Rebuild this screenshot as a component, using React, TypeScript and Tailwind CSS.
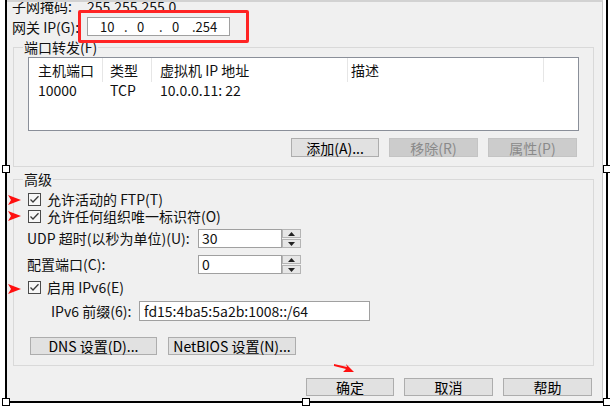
import React from "react";

const Check = () => (
  <svg width="13" height="13" viewBox="0 0 13 13" className="shrink-0">
    <rect x="0.5" y="0.5" width="12" height="12" fill="#f7f7f7" stroke="#4a4a4a" />
    <polyline points="2.5,6.5 5,9 10.5,3.2" fill="none" stroke="#3a3a3a" strokeWidth="1.3" />
  </svg>
);

const Spinner = () => (
  <div className="flex flex-col w-[19px] h-[19px] gap-[1px]">
    <div className="flex-1 flex items-center justify-center bg-[#e6e6e6] border border-[#b4b4b4]">
      <svg width="7" height="4" viewBox="0 0 7 4">
        <polygon points="0,4 3.5,0 7,4" fill="#222" />
      </svg>
    </div>
    <div className="flex-1 flex items-center justify-center bg-[#e6e6e6] border border-[#b4b4b4]">
      <svg width="7" height="4" viewBox="0 0 7 4">
        <polygon points="0,0 7,0 3.5,4" fill="#222" />
      </svg>
    </div>
  </div>
);

const Btn = ({ label, w, disabled }: { label: string; w: string; disabled?: boolean }) => (
  <div
    className={
      disabled
        ? `${w} h-full flex items-center justify-center bg-[#cccccc] border border-[#c4c4c4] text-[#8a8a8a]`
        : `${w} h-full flex items-center justify-center bg-[#e1e1e1] border border-[#adadad] text-black`
    }
  >
    {label}
  </div>
);

const RedArrow = ({ top }: { top: string }) => (
  <svg width="13" height="10" viewBox="0 0 13 10" className={`absolute left-[8px] ${top}`}>
    <polygon points="0,0 13,5 0,10 3,5" fill="#ff1010" />
  </svg>
);

export default function App() {
  return (
    <div className="relative w-[610px] h-[407px] bg-white overflow-hidden font-['Noto_Sans_CJK_SC',sans-serif] text-[14px] text-[#111] leading-[20px]">
      {/* dialog */}
      <div className="ml-[7px] w-[596px] h-[401px] bg-[#f0f0f0] border-t-2 border-r border-t-[#d2d2d2] border-r-[#c8c8c8] overflow-hidden">
        <div className="flex h-[20px] items-center pl-[5px] mt-[-6px]">
          <span className="w-[75px]">子网掩码:</span>
          <span>255.255.255.0</span>
        </div>
        <div className="flex h-[21px] items-center pl-[5px]">
          <span className="w-[75px]">网关 IP(G):</span>
          <div className="w-[143px] h-[19px] bg-white border border-[#a0a0a0] flex items-center text-[13px] whitespace-pre pl-[12px]">
            <span className="w-[24px]">10</span>
            <span className="w-[13px]">.</span>
            <span className="w-[22px]">0</span>
            <span className="w-[13px]">.</span>
            <span className="w-[20px]">0</span>
            <span>.254</span>
          </div>
        </div>

        {/* port forwarding */}
        <fieldset className="ml-[6px] w-[581px] border border-[#d9d9d9]">
          <legend className="ml-[9px] px-[1px] leading-[20px]">端口转发(F)</legend>
          <div className="px-[14px] pb-[9px]">
            <div className="h-[74px] bg-white border border-[#8a8f99] flex flex-col">
              <div className="flex h-[24px] items-center">
                <div className="w-[74px] h-full flex items-center pl-[9px] border-r border-[#e6e6e6]">主机端口</div>
                <div className="w-[49px] h-full flex items-center pl-[7px] border-r border-[#e6e6e6]">类型</div>
                <div className="w-[196px] h-full flex items-center pl-[8px] border-r border-[#e6e6e6]">虚拟机 IP 地址</div>
                <div className="w-[196px] h-full flex items-center pl-[3px] border-r border-[#e6e6e6]">描述</div>
              </div>
              <div className="flex h-[17px] items-center leading-[17px]">
                <div className="w-[74px] pl-[9px]">10000</div>
                <div className="w-[49px] pl-[7px]">TCP</div>
                <div className="w-[196px] pl-[8px]">10.0.0.11: 22</div>
              </div>
            </div>
            <div className="flex justify-end gap-[10px] h-[19px] mt-[7px] mr-[2px]">
              <Btn label="添加(A)..." w="w-[88px]" />
              <Btn label="移除(R)" w="w-[89px]" disabled />
              <Btn label="属性(P)" w="w-[89px]" disabled />
            </div>
          </div>
        </fieldset>

        {/* advanced */}
        <fieldset className="ml-[6px] mt-[2px] w-[581px] border border-[#d9d9d9]">
          <legend className="ml-[9px] px-[1px] leading-[20px]">高级</legend>
          <div className="pl-[14px] pb-[10px] pt-[2px]">
            <div className="flex h-[17px] items-center gap-[6px] leading-[17px]">
              <Check />
              <span>允许活动的 FTP(T)</span>
            </div>
            <div className="flex h-[17px] items-center gap-[6px] leading-[17px]">
              <Check />
              <span>允许任何组织唯一标识符(O)</span>
            </div>
            <div className="flex h-[19px] items-center mt-[4px] leading-[19px]">
              <span className="w-[170px] -ml-[1px] mr-[1px]">UDP 超时(以秒为单位)(U):</span>
              <div className="w-[84px] h-[19px] bg-white border border-[#a0a0a0] flex items-center pl-[3px]">30</div>
              <Spinner />
            </div>
            <div className="flex h-[19px] items-center mt-[7px] leading-[19px]">
              <span className="w-[170px] -ml-[1px] mr-[1px]">配置端口(C):</span>
              <div className="w-[84px] h-[19px] bg-white border border-[#a0a0a0] flex items-center pl-[3px]">0</div>
              <Spinner />
            </div>
            <div className="flex h-[17px] items-center gap-[6px] mt-[5px] leading-[17px]">
              <Check />
              <span>启用 IPv6(E)</span>
            </div>
            <div className="flex h-[20px] items-center mt-[5px] pl-[23px]">
              <span className="w-[88px]">IPv6 前缀(6):</span>
              <div className="w-[231px] h-[20px] bg-white border border-[#a0a0a0] flex items-center pl-[4px]">fd15:4ba5:5a2b:1008::/64</div>
            </div>
            <div className="flex gap-[11px] h-[18px] mt-[16px] pl-[2px] leading-[18px]">
              <Btn label="DNS 设置(D)..." w="w-[127px]" />
              <Btn label="NetBIOS 设置(N)..." w="w-[128px]" />
            </div>
          </div>
        </fieldset>

        <div className="flex justify-end gap-[10px] h-[18px] mt-[12px] pr-[10px] leading-[18px]">
          <Btn label="确定" w="w-[88px]" />
          <Btn label="取消" w="w-[89px]" />
          <Btn label="帮助" w="w-[89px]" />
        </div>
      </div>

      {/* selection frame */}
      <div className="absolute left-[5px] top-0 w-[2px] h-[403px] bg-black" />
      <div className="absolute left-[606px] top-0 w-[2px] h-[403px] bg-black" />
      <div className="absolute left-[5px] top-[401px] w-[603px] h-[2px] bg-black" />
      <div className="absolute left-[2px] top-[165px] w-[8px] h-[8px] bg-white border border-black" />
      <div className="absolute left-[603px] top-[165px] w-[8px] h-[8px] bg-white border border-black" />
      <div className="absolute left-[2px] top-[398px] w-[8px] h-[8px] bg-white border border-black" />
      <div className="absolute left-[302px] top-[398px] w-[8px] h-[8px] bg-white border border-black" />
      <div className="absolute left-[603px] top-[398px] w-[8px] h-[8px] bg-white border border-black" />

      {/* annotations */}
      <div className="absolute left-[78px] top-[10px] w-[171px] h-[33px] border-[3px] border-[#ff2424] rounded-[2px]" />
      <RedArrow top="top-[195px]" />
      <RedArrow top="top-[211px]" />
      <RedArrow top="top-[284px]" />
      <svg width="20" height="10" viewBox="0 0 20 10" className="absolute left-[334px] top-[363px]">
        <polygon points="0,1 13,4 12,1 20,9 9,9 12,6 0,3" fill="#ff1010" />
      </svg>
    </div>
  );
}
